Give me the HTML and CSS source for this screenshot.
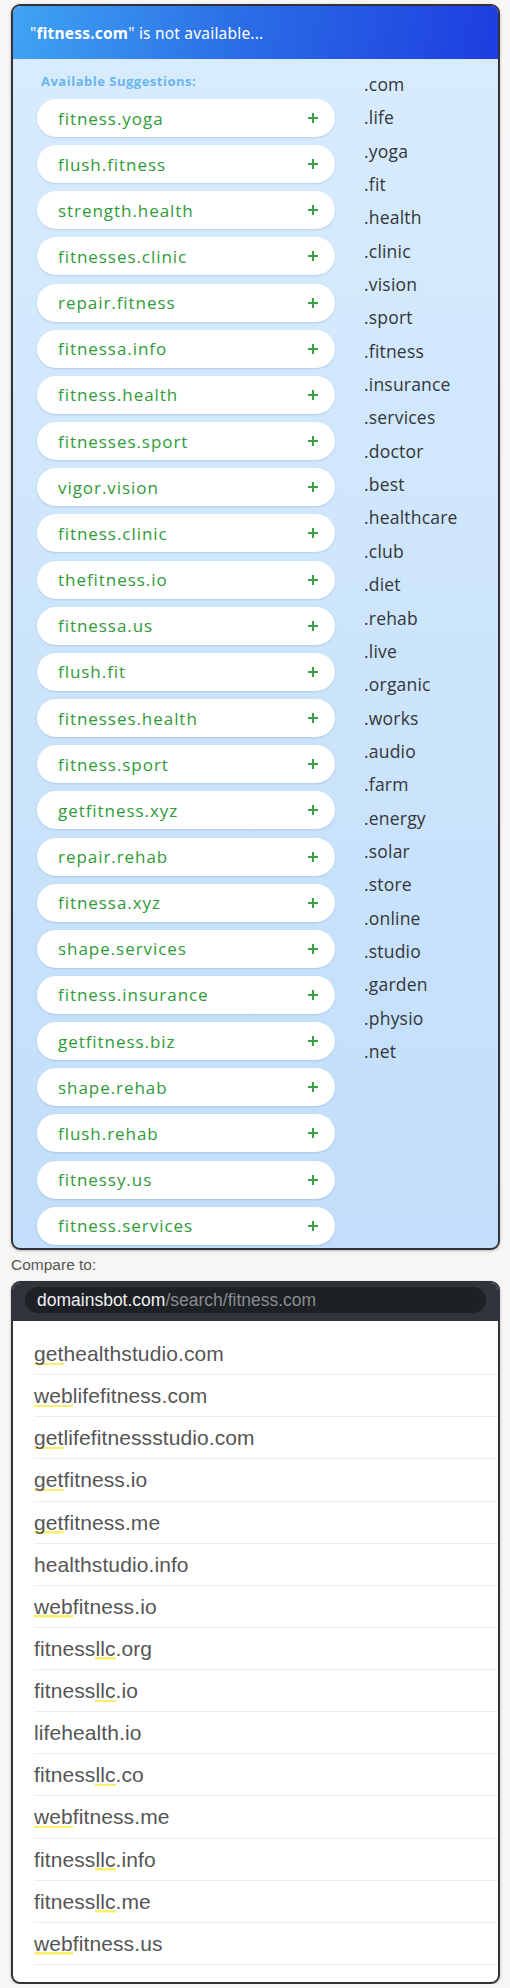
FILE: index.html
```html
<!DOCTYPE html>
<html>
<head>
<meta charset="utf-8">
<link rel="stylesheet" href="styles.css">
</head>
<body>
<div class="page">
  <section class="card">
    <header class="card-head"><span class="q">"<b>fitness.com</b>"</span>&nbsp;is not available...</header>
    <div class="card-body">
      <div class="sugg">
        <div class="label">Available Suggestions:</div>
        <ul class="pills">
          <li class="pill"><span>fitness.yoga</span><i class="plus"></i></li>
          <li class="pill"><span>flush.fitness</span><i class="plus"></i></li>
          <li class="pill"><span>strength.health</span><i class="plus"></i></li>
          <li class="pill"><span>fitnesses.clinic</span><i class="plus"></i></li>
          <li class="pill"><span>repair.fitness</span><i class="plus"></i></li>
          <li class="pill"><span>fitnessa.info</span><i class="plus"></i></li>
          <li class="pill"><span>fitness.health</span><i class="plus"></i></li>
          <li class="pill"><span>fitnesses.sport</span><i class="plus"></i></li>
          <li class="pill"><span>vigor.vision</span><i class="plus"></i></li>
          <li class="pill"><span>fitness.clinic</span><i class="plus"></i></li>
          <li class="pill"><span>thefitness.io</span><i class="plus"></i></li>
          <li class="pill"><span>fitnessa.us</span><i class="plus"></i></li>
          <li class="pill"><span>flush.fit</span><i class="plus"></i></li>
          <li class="pill"><span>fitnesses.health</span><i class="plus"></i></li>
          <li class="pill"><span>fitness.sport</span><i class="plus"></i></li>
          <li class="pill"><span>getfitness.xyz</span><i class="plus"></i></li>
          <li class="pill"><span>repair.rehab</span><i class="plus"></i></li>
          <li class="pill"><span>fitnessa.xyz</span><i class="plus"></i></li>
          <li class="pill"><span>shape.services</span><i class="plus"></i></li>
          <li class="pill"><span>fitness.insurance</span><i class="plus"></i></li>
          <li class="pill"><span>getfitness.biz</span><i class="plus"></i></li>
          <li class="pill"><span>shape.rehab</span><i class="plus"></i></li>
          <li class="pill"><span>flush.rehab</span><i class="plus"></i></li>
          <li class="pill"><span>fitnessy.us</span><i class="plus"></i></li>
          <li class="pill"><span>fitness.services</span><i class="plus"></i></li>
        </ul>
      </div>
      <ul class="tlds">
        <li>.com</li><li>.life</li><li>.yoga</li><li>.fit</li><li>.health</li><li>.clinic</li><li>.vision</li><li>.sport</li><li>.fitness</li><li>.insurance</li><li>.services</li><li>.doctor</li><li>.best</li><li>.healthcare</li><li>.club</li><li>.diet</li><li>.rehab</li><li>.live</li><li>.organic</li><li>.works</li><li>.audio</li><li>.farm</li><li>.energy</li><li>.solar</li><li>.store</li><li>.online</li><li>.studio</li><li>.garden</li><li>.physio</li><li>.net</li>
      </ul>
    </div>
  </section>

  <div class="compare">Compare to:</div>

  <section class="card dark">
    <div class="bar">
      <div class="url"><span class="host">domainsbot.com</span><span class="path">/search/fitness.com</span></div>
    </div>
    <ul class="results">
      <li><span class="hl">get</span>healthstudio.com</li>
      <li><span class="hl">web</span>lifefitness.com</li>
      <li><span class="hl">get</span>lifefitnessstudio.com</li>
      <li><span class="hl">get</span>fitness.io</li>
      <li><span class="hl">get</span>fitness.me</li>
      <li>healthstudio.info</li>
      <li><span class="hl">web</span>fitness.io</li>
      <li>fitness<span class="hl">llc</span>.org</li>
      <li>fitness<span class="hl">llc</span>.io</li>
      <li>lifehealth.io</li>
      <li>fitness<span class="hl">llc</span>.co</li>
      <li><span class="hl">web</span>fitness.me</li>
      <li>fitness<span class="hl">llc</span>.info</li>
      <li>fitness<span class="hl">llc</span>.me</li>
      <li><span class="hl">web</span>fitness.us</li>
    </ul>
  </section>
</div>
</body>
</html>
```
FILE: styles.css
```css
* { box-sizing: border-box; }
html, body { margin: 0; padding: 0; }
body {
  background: #f7f6f4;
  font-family: "Liberation Sans", Arial, sans-serif;
  width: 510px;
}
ul { list-style: none; margin: 0; padding: 0; }

.page { padding: 4px 10px 0 11px; }

.card {
  border: 2px solid #30343a;
  border-radius: 9px;
  overflow: hidden;
  box-shadow: 0 1px 3px rgba(0,0,0,0.25);
  background: linear-gradient(180deg, #d8ecfd 0%, #c2defa 100%);
}

.card-head {
  height: 53px;
  display: flex;
  align-items: center;
  padding-left: 17px;
  color: #fff;
  font-family: "Noto Sans", "Open Sans", sans-serif;
  font-size: 15.5px;
  letter-spacing: 0.2px;
  background: linear-gradient(100deg, #40a4f3 0%, #2b6fe6 45%, #1d3de0 100%);
}
.card-head b { font-weight: 700; }

.card-body {
  display: flex;
  height: 1189px;
}

.sugg { width: 322px; padding: 14px 0 0 24px; flex: none; }
.label {
  font-family: "Open Sans", "Noto Sans", sans-serif;
  font-weight: 700;
  font-size: 13px;
  line-height: 16px;
  color: #6bb5ee;
  padding-left: 4px;
  margin-bottom: 10px;
  letter-spacing: 0.5px;
}
.pills { display: flex; flex-direction: column; gap: 8.17px; }
.pill {
  width: 298px;
  height: 38px;
  background: #fff;
  border-radius: 19px;
  box-shadow: 0 1px 2px rgba(40,90,150,0.18);
  display: flex;
  align-items: center;
  justify-content: space-between;
  padding: 0 17px 0 21px;
  color: #2e9b38;
  font-family: "Open Sans", "Noto Sans", sans-serif;
  font-weight: 500;
  font-size: 17px;
  letter-spacing: 0.95px;
}
.plus {
  width: 10px;
  height: 10px;
  position: relative;
  flex: none;
}
.plus::before, .plus::after {
  content: "";
  position: absolute;
  background: #3aa244;
}
.plus::before { left: 0; right: 0; top: 4px; height: 2px; }
.plus::after { top: 0; bottom: 0; left: 4px; width: 2px; }

.tlds {
  padding: 9px 0 0 29px;
  font-family: "Open Sans", "Noto Sans", sans-serif;
  font-size: 17.5px;
  letter-spacing: 0.2px;
  color: #33363a;
}
.tlds li { line-height: 33.35px; }

.compare {
  font-size: 15.5px;
  color: #555;
  line-height: 20px;
  padding: 5px 0 6px 0;
}

.card.dark { background: #fff; }
.bar {
  background: #30343a;
  height: 38px;
  padding: 4px 12px 0 12px;
}
.url {
  height: 26px;
  border-radius: 13px;
  background: #1d2025;
  display: flex;
  align-items: center;
  padding-left: 12px;
  font-size: 17.5px;
}
.host { color: #f0f0f0; }
.path { color: #8a8d92; }

.results { padding: 12px 0 17px 21px; }
.results li {
  height: 42.14px;
  line-height: 41px;
  border-bottom: 1px solid #ececec;
  font-size: 21px;
  letter-spacing: 0.1px;
  color: #555;
}
.hl {
  background: linear-gradient(#fbef6a, #fbef6a) no-repeat 0 100% / 100% 2.5px;
}
```
